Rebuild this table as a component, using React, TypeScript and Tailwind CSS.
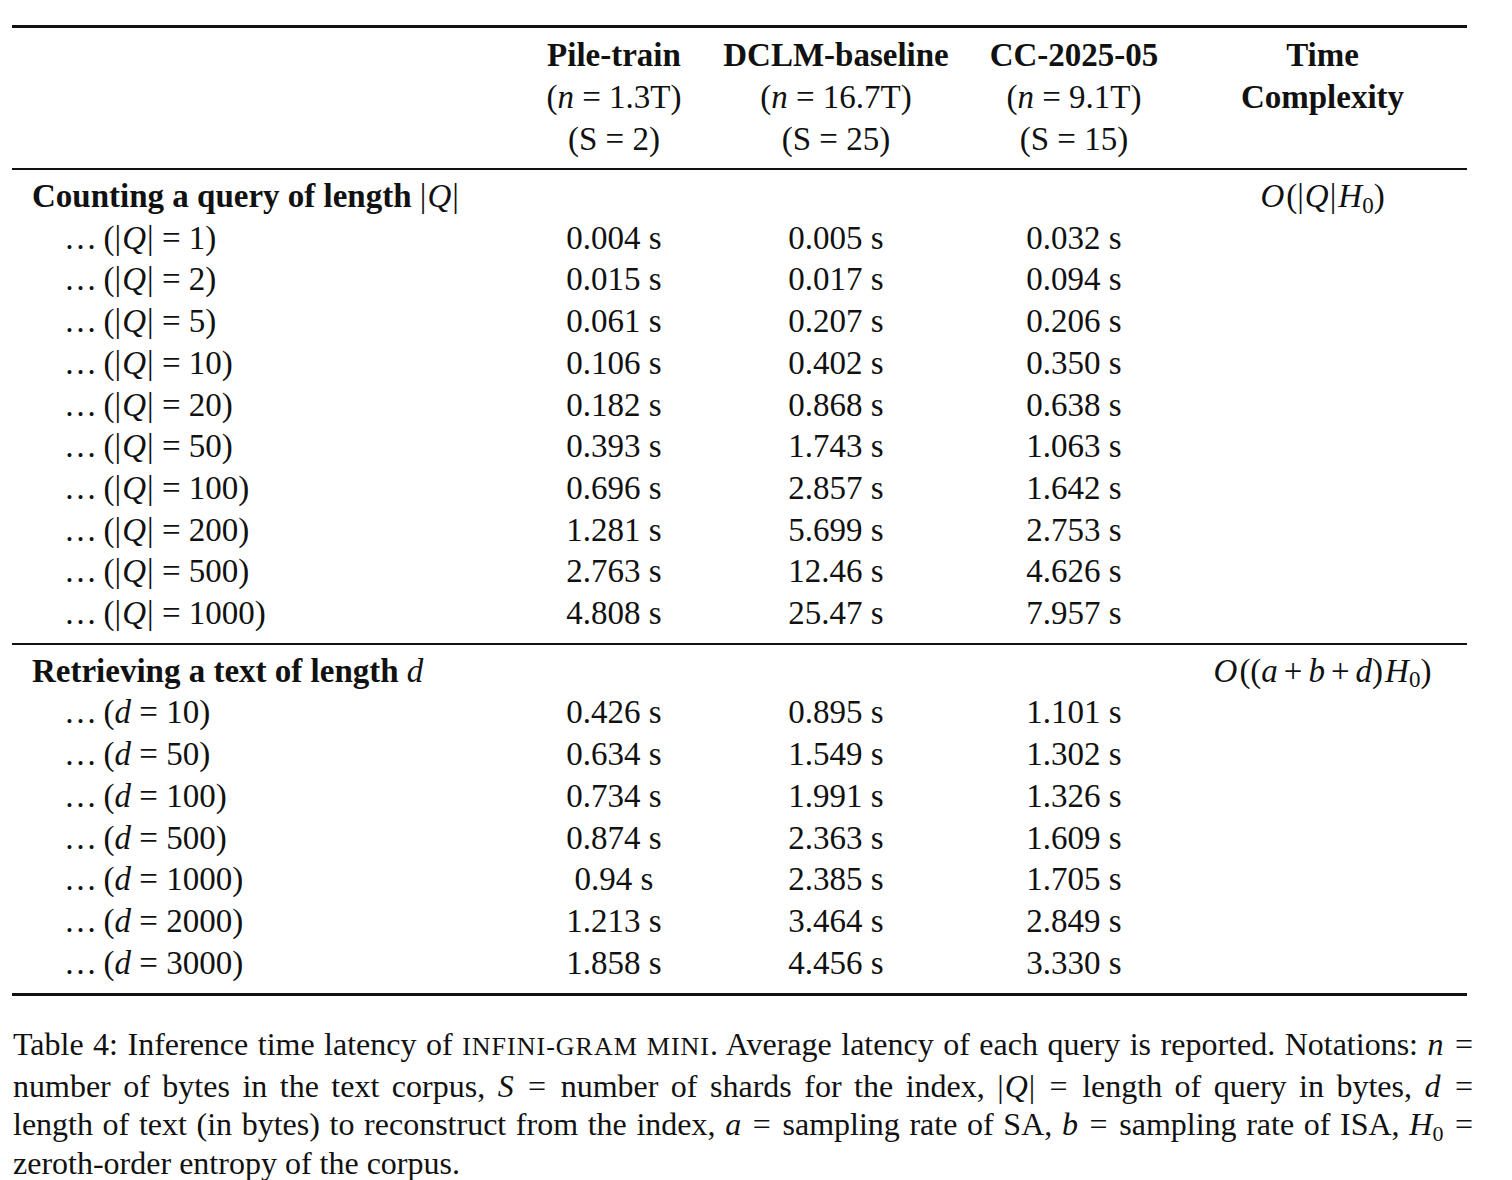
const countRows = [
  ['1', '0.004 s', '0.005 s', '0.032 s'],
  ['2', '0.015 s', '0.017 s', '0.094 s'],
  ['5', '0.061 s', '0.207 s', '0.206 s'],
  ['10', '0.106 s', '0.402 s', '0.350 s'],
  ['20', '0.182 s', '0.868 s', '0.638 s'],
  ['50', '0.393 s', '1.743 s', '1.063 s'],
  ['100', '0.696 s', '2.857 s', '1.642 s'],
  ['200', '1.281 s', '5.699 s', '2.753 s'],
  ['500', '2.763 s', '12.46 s', '4.626 s'],
  ['1000', '4.808 s', '25.47 s', '7.957 s'],
];

const retrieveRows = [
  ['10', '0.426 s', '0.895 s', '1.101 s'],
  ['50', '0.634 s', '1.549 s', '1.302 s'],
  ['100', '0.734 s', '1.991 s', '1.326 s'],
  ['500', '0.874 s', '2.363 s', '1.609 s'],
  ['1000', '0.94 s', '2.385 s', '1.705 s'],
  ['2000', '1.213 s', '3.464 s', '2.849 s'],
  ['3000', '1.858 s', '4.456 s', '3.330 s'],
];

const grid = 'grid grid-cols-[514px_176px_268px_208px_289px] leading-[41.7px]';

function AbsQ() {
  return (
    <span>
      |<i className="px-[1px]">Q</i>|
    </span>
  );
}

// math-style equals / plus with wider side bearings
function Eq() {
  return <span className="px-[2px]">{' = '}</span>;
}

function Plus() {
  return <span className="mx-[6px]">+</span>;
}

function DataRow({ label, values }: { label: React.ReactNode; values: string[] }) {
  return (
    <div className={grid}>
      <div className="pl-[52px] whitespace-nowrap">
        …{'\u2009'}({label})
      </div>
      {values.map((v, i) => (
        <div key={i} className="text-center whitespace-nowrap">
          {v}
        </div>
      ))}
      <div />
    </div>
  );
}

export default function App() {
  return (
    <div className="min-h-screen bg-white text-[#111] font-['Liberation_Serif',serif]">
      <div className="pt-[25px] pl-[12px] w-[1467px]">
        {/* table */}
        <div className="w-[1455px] text-[33px]">
          <div className="h-[3px] bg-[#111]" />

          {/* header */}
          <div className="grid grid-cols-[514px_176px_268px_208px_289px] leading-[42px] pt-[6px] pb-[8px]">
            <div />
            <div className="text-center whitespace-nowrap">
              <div className="font-bold">Pile-train</div>
              <div>
                (<i>n</i> = 1.3T)
              </div>
              <div>(S = 2)</div>
            </div>
            <div className="text-center whitespace-nowrap">
              <div className="font-bold">DCLM-baseline</div>
              <div>
                (<i>n</i> = 16.7T)
              </div>
              <div>(S = 25)</div>
            </div>
            <div className="text-center whitespace-nowrap">
              <div className="font-bold">CC-2025-05</div>
              <div>
                (<i>n</i> = 9.1T)
              </div>
              <div>(S = 15)</div>
            </div>
            <div className="text-center font-bold">
              <div>Time</div>
              <div>Complexity</div>
            </div>
          </div>

          <div className="h-[2px] bg-[#111]" />

          {/* counting */}
          <div className="pt-[6px] pb-[8px]">
            <div className={grid}>
              <div className="pl-[20px] whitespace-nowrap">
                <span className="font-bold">Counting a query of length</span> <AbsQ />
              </div>
              <div />
              <div />
              <div />
              <div className="text-center whitespace-nowrap">
                <i className="pr-[2px]">O</i>(<AbsQ />
                <i className="pl-[2px]">H</i>
                <sub className="text-[23px]">0</sub>)
              </div>
            </div>
            {countRows.map((r) => (
              <DataRow
                key={r[0]}
                label={
                  <>
                    <AbsQ /> = {r[0]}
                  </>
                }
                values={r.slice(1)}
              />
            ))}
          </div>

          <div className="h-[2px] bg-[#111]" />

          {/* retrieving */}
          <div className="pt-[6px] pb-[9px]">
            <div className={grid}>
              <div className="pl-[20px] whitespace-nowrap">
                <span className="font-bold">Retrieving a text of length</span> <i>d</i>
              </div>
              <div />
              <div />
              <div />
              <div className="text-center whitespace-nowrap">
                <i className="pr-[2px]">O</i>((<i>a</i>
                <Plus />
                <i>b</i>
                <Plus />
                <i>d</i>)<i className="pl-[2px]">H</i>
                <sub className="text-[23px]">0</sub>)
              </div>
            </div>
            {retrieveRows.map((r) => (
              <DataRow
                key={r[0]}
                label={
                  <>
                    <i>d</i> = {r[0]}
                  </>
                }
                values={r.slice(1)}
              />
            ))}
          </div>

          <div className="h-[3px] bg-[#111]" />
        </div>

        {/* caption */}
        <div className="mt-[29px] w-[1463px] text-[32px] leading-[38.5px] pl-[1px]">
          <div className="text-justify [text-align-last:justify] whitespace-nowrap">
            Table 4: Inference time latency of <span className="text-[26px] tracking-[1px]">INFINI-GRAM MINI</span>.
            Average latency of each query is reported. Notations: <i>n</i>
            <Eq />
          </div>
          <div className="text-justify [text-align-last:justify]">
            number of bytes in the text corpus, <i>S</i>
            <Eq />
            number of shards for the index, <AbsQ />
            <Eq />
            length of query in bytes, <i>d</i>
            <Eq />
          </div>
          <div className="text-justify [text-align-last:justify]">
            length of text (in bytes) to reconstruct from the index, <i>a</i>
            <Eq />
            sampling rate of SA, <i>b</i>
            <Eq />
            sampling rate of ISA, <i>H</i>
            <sub className="text-[22px]">0</sub>
            <Eq />
          </div>
          <div>zeroth-order entropy of the corpus.</div>
        </div>
      </div>
    </div>
  );
}
